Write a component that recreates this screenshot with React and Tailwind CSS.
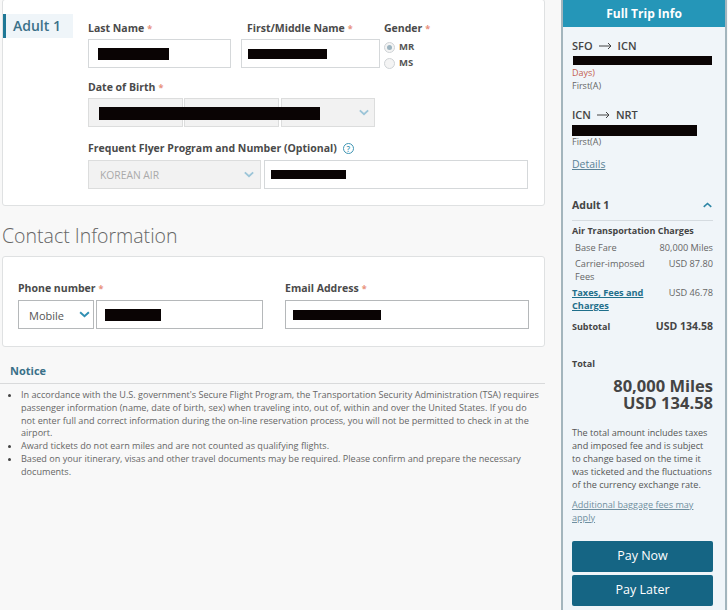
function Req() {
  return <span className="text-[#e8917c] ml-[3px] text-[9px]">*</span>;
}

function Label({ children, className = "" }) {
  return (
    <div className={"text-[10.5px] leading-[14px] font-bold text-[#4a4a4a] " + className}>
      {children}
      <Req />
    </div>
  );
}

function Redact({ className = "" }) {
  return <div className={"bg-[#0a0404] " + className}></div>;
}

function Chevron({ className = "" }) {
  return (
    <svg viewBox="0 0 12 8" className={className} fill="none" stroke="currentColor" strokeWidth="2.2">
      <path d="M1 1.5 L6 6 L11 1.5" />
    </svg>
  );
}

function Arrow() {
  return (
    <svg viewBox="0 0 13 8" className="w-[13px] h-[8px] mx-[6px]" fill="none" stroke="#444" strokeWidth="1">
      <path d="M0 4 H12 M9 1 L12 4 L9 7" />
    </svg>
  );
}

function Field({ className = "", children }) {
  return <div className={"h-[29px] border border-[#d5d8da] bg-white flex items-center " + className}>{children}</div>;
}

function Grey({ className = "", children }) {
  return <div className={"h-[29px] border border-[#dcdddd] bg-[#f2f2f2] flex items-center " + className}>{children}</div>;
}

function Radio({ on, label }) {
  return (
    <div className="flex items-center gap-[4px] h-[16px]">
      <div className="w-[11px] h-[11px] rounded-full border border-[#cfd3d6] bg-[#f4f4f4] flex items-center justify-center">
        {on && <div className="w-[5px] h-[5px] rounded-full bg-[#9db4c0]"></div>}
      </div>
      <span className="text-[9.5px] font-bold text-[#555]">{label}</span>
    </div>
  );
}

function Charge({ label, value, link }) {
  return (
    <div className="flex justify-between text-[9.2px] leading-[13px] text-[#666] mb-[3px]">
      {link ? (
        <span className="w-[80px] font-bold text-[#1f6f8b] underline">{label}</span>
      ) : (
        <span className="w-[80px] pl-[3px]">{label}</span>
      )}
      <span>{value}</span>
    </div>
  );
}

function Sidebar() {
  return (
    <aside className="w-[166px] h-[610px] shrink-0 bg-[#f0f5f9] border-x-2 border-[#a3b5bd] overflow-hidden">
      <div className="h-[27px] -mx-[2px] bg-[#2596b8] text-white text-[12px] font-bold flex items-center justify-center">
        Full Trip Info
      </div>
      <div className="pl-[9px] pr-[12px] pt-[11px]">
        <div className="flex items-center text-[11px] leading-[16px] font-semibold text-[#444]">
          SFO <Arrow /> ICN
        </div>
        <Redact className="h-[9px] w-[139px] mt-[2px] ml-px" />
        <div className="text-[9px] leading-[12px] mt-[2px] text-[#c4604f]">Days)</div>
        <div className="text-[9px] leading-[13px] text-[#666]">First(A)</div>
        <div className="flex items-center text-[11px] leading-[16px] font-semibold text-[#444] mt-[15px]">
          ICN <Arrow /> NRT
        </div>
        <Redact className="h-[11px] w-[125px] mt-[2px]" />
        <div className="text-[9px] leading-[13px] -mt-[1px] text-[#666]">First(A)</div>
        <div className="text-[10.5px] leading-[15px] mt-[9px] text-[#5b8296] underline">Details</div>

        <div className="flex items-center justify-between mt-[26px] pb-[8px] border-b border-[#d5dbe0]">
          <span className="text-[10.5px] leading-[14px] font-bold text-[#444]">Adult 1</span>
          <Chevron className="w-[9px] h-[6px] text-[#2f86a6] rotate-180 mr-[1px]" />
        </div>
        <div className="text-[9px] leading-[13px] font-bold text-[#444] mt-[3px] mb-[4px] whitespace-nowrap">Air Transportation Charges</div>
        <Charge label="Base Fare" value="80,000 Miles" />
        <Charge label="Carrier-imposed Fees" value="USD 87.80" />
        <Charge label="Taxes, Fees and Charges" value="USD 46.78" link />
        <div className="flex justify-between items-center mt-[7px]">
          <span className="text-[9px] font-bold text-[#444]">Subtotal</span>
          <span className="text-[10.5px] font-bold text-[#444]">USD 134.58</span>
        </div>

        <div className="text-[9px] leading-[13px] font-bold text-[#444] mt-[22px]">Total</div>
        <div className="text-right text-[16.5px] leading-[17px] font-bold text-[#444] mt-[7px]">
          <div>80,000 Miles</div>
          <div>USD 134.58</div>
        </div>
        <p className="text-[9.1px] leading-[13px] text-[#555] mt-[15px] whitespace-nowrap">
          The total amount includes taxes<br />and imposed fee and is subject<br />to change based on the time it<br />was ticketed and the fluctuations<br />of the currency exchange rate.
        </p>
        <div className="text-[9.1px] leading-[13px] text-[#6f8fa0] underline mt-[7px]">Additional baggage fees may apply</div>
        <div className="mt-[17px] flex flex-col gap-[3px]">
          <div className="h-[31px] bg-[#156584] rounded-[2px] text-white text-[12.5px] flex items-center justify-center">Pay Now</div>
          <div className="h-[31px] bg-[#156584] rounded-[2px] text-white text-[12.5px] flex items-center justify-center">Pay Later</div>
        </div>
      </div>
    </aside>
  );
}

export default function App() {
  return (
    <div className="w-[728px] h-[610px] overflow-hidden bg-[#f8f8f8] flex font-['Open_Sans',sans-serif]">
      <main className="w-[561px] shrink-0">
        {/* Passenger card */}
        <section className="ml-[2px] w-[543px] h-[207px] -mt-px border border-[#dfe1e2] rounded-[3px] bg-white flex">
          <div className="w-[85px] shrink-0 pt-[14px]">
            <div className="w-[70px] h-[24px] bg-[#eff5f9] border-l-[3px] border-[#1f7896] pl-[7px] text-[14px] leading-[23px] font-semibold text-[#3b7189]">
              Adult 1
            </div>
          </div>
          <div className="pt-[21px]">
            <div className="flex">
              <div className="w-[153px]">
                <Label className="mb-[3px]">Last Name</Label>
                <Field className="w-[143px] pl-[9px]"><Redact className="w-[71px] h-[12px]" /></Field>
              </div>
              <div className="w-[143px]">
                <Label className="mb-[3px] ml-[6px]">First/Middle Name</Label>
                <Field className="w-[139px] pl-[6px]"><Redact className="w-[79px] h-[10px]" /></Field>
              </div>
              <div>
                <Label className="mb-[3px]">Gender</Label>
                <div>
                  <Radio on label="MR" />
                  <Radio label="MS" />
                </div>
              </div>
            </div>

            <Label className="mt-[9px] mb-[3px]">Date of Birth</Label>
            <div className="relative flex">
              <Grey className="w-[95px] mr-px" />
              <Grey className="w-[95px] mr-[2px]" />
              <Grey className="w-[94px] justify-end pr-[5px]">
                <Chevron className="w-[10px] h-[7px] text-[#9cc5d8]" />
              </Grey>
              <Redact className="absolute left-[11px] top-[9px] w-[221px] h-[13px]" />
            </div>

            <div className="flex items-center mt-[14px] mb-[5px] text-[10.5px] leading-[14px] font-bold text-[#4a4a4a]">
              Frequent Flyer Program and Number (Optional)
              <div className="ml-[6px] w-[11px] h-[11px] rounded-full border border-[#3f95b3] text-[#3f95b3] text-[8px] leading-[9px] text-center font-semibold">?</div>
            </div>
            <div className="flex gap-[3px]">
              <Grey className="w-[173px] pl-[11px] pr-[5px] justify-between">
                <span className="text-[10.3px] text-[#aaa] pt-[2px]">KOREAN AIR</span>
                <Chevron className="w-[10px] h-[7px] mr-[1px] text-[#9cc5d8]" />
              </Grey>
              <Field className="w-[264px] pl-[6px]"><Redact className="w-[75px] h-[9px]" /></Field>
            </div>
          </div>
        </section>

        <h2 className="ml-[2px] mt-[16px] text-[19.5px] leading-[27px] font-light text-[#666]">Contact Information</h2>

        {/* Contact card */}
        <section className="ml-[2px] w-[543px] h-[91px] mt-[7px] border border-[#dfe1e2] rounded-[3px] bg-white pl-[15px] pt-[24px] flex gap-[22px]">
          <div>
            <Label className="mb-[4px]">Phone number</Label>
            <div className="flex gap-[2px]">
              <div className="w-[76px] h-[29px] border border-[#b5b8ba] flex items-center justify-between pl-[10px] pr-[3px]">
                <span className="text-[11px] text-[#555] pt-[3px]">Mobile</span>
                <Chevron className="w-[11px] h-[7px] text-[#2f8fb3]" />
              </div>
              <div className="w-[167px] h-[29px] border border-[#b5b8ba] flex items-center pl-[8px]">
                <Redact className="w-[56px] h-[12px]" />
              </div>
            </div>
          </div>
          <div>
            <Label className="mb-[4px]">Email Address</Label>
            <div className="w-[244px] h-[29px] border border-[#b5b8ba] flex items-center pl-[7px]">
              <Redact className="w-[88px] h-[10px]" />
            </div>
          </div>
        </section>

        <div className="mt-[16px] pl-[10px] text-[11px] leading-[15px] font-bold text-[#3a7088]">Notice</div>
        <div className="w-[545px] mt-[5px] border-t border-[#d9dadb]"></div>
        <ul className="mt-[5px] ml-[21px] w-[524px] list-disc text-[9.1px] leading-[12.8px] text-[#666] marker:text-[#444]">
          <li>In accordance with the U.S. government's Secure Flight Program, the Transportation Security Administration (TSA) requires<br />passenger information (name, date of birth, sex) when traveling into, out of, within and over the United States. If you do<br />not enter full and correct information during the on-line reservation process, you will not be permitted to check in at the<br />airport.</li>
          <li>Award tickets do not earn miles and are not counted as qualifying flights.</li>
          <li>Based on your itinerary, visas and other travel documents may be required. Please confirm and prepare the necessary<br />documents.</li>
        </ul>
      </main>
      <Sidebar />
    </div>
  );
}
